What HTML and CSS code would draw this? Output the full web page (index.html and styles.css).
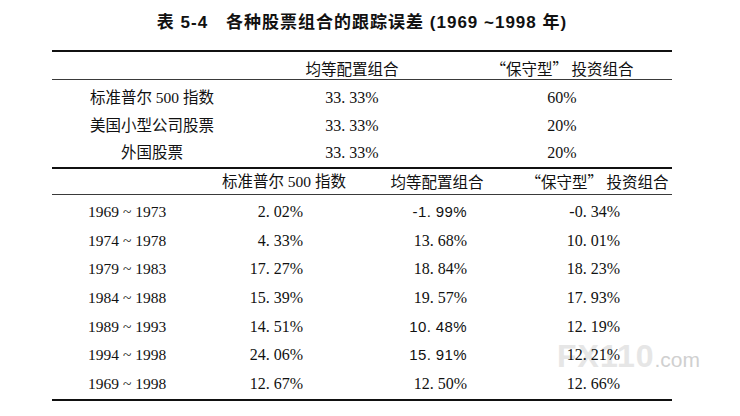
FILE: index.html
```html
<!DOCTYPE html>
<html lang="zh-CN">
<head>
<meta charset="utf-8">
<title>表 5-4 各种股票组合的跟踪误差</title>
<link rel="stylesheet" href="styles.css">
</head>
<body>
<div class="page">
  <h1 class="title">表 5-4&emsp;各种股票组合的跟踪误差 (1969 ~1998 年)</h1>
  <div class="table">
    <div class="grid3 head3">
      <div class="cell"></div>
      <div class="cell zhh">均等配置组合</div>
      <div class="cell zhh">“保守型” 投资组合</div>
    </div>
    <div class="grid3 body3">
      <div class="cell zh">标准普尔 500 指数</div>
      <div class="cell num">33. 33%</div>
      <div class="cell num">60%</div>
      <div class="cell zh">美国小型公司股票</div>
      <div class="cell num">33. 33%</div>
      <div class="cell num">20%</div>
      <div class="cell zh">外国股票</div>
      <div class="cell num">33. 33%</div>
      <div class="cell num">20%</div>
    </div>
    <div class="grid4 head4">
      <div class="cell"></div>
      <div class="cell zh">标准普尔 500 指数</div>
      <div class="cell zhh">均等配置组合</div>
      <div class="cell zhh">“保守型” 投资组合</div>
    </div>
    <div class="grid4 body4">
      <div class="yr">1969 ~ 1973</div><div class="num c2">2. 02%</div><div class="num c3 sans">-1. 99%</div><div class="num c4">-0. 34%</div>
      <div class="yr">1974 ~ 1978</div><div class="num c2">4. 33%</div><div class="num c3">13. 68%</div><div class="num c4">10. 01%</div>
      <div class="yr">1979 ~ 1983</div><div class="num c2">17. 27%</div><div class="num c3">18. 84%</div><div class="num c4">18. 23%</div>
      <div class="yr">1984 ~ 1988</div><div class="num c2">15. 39%</div><div class="num c3">19. 57%</div><div class="num c4">17. 93%</div>
      <div class="yr">1989 ~ 1993</div><div class="num c2">14. 51%</div><div class="num c3 sans">10. 48%</div><div class="num c4">12. 19%</div>
      <div class="yr">1994 ~ 1998</div><div class="num c2">24. 06%</div><div class="num c3 sans">15. 91%</div><div class="num c4">12. 21%</div>
      <div class="yr">1969 ~ 1998</div><div class="num c2">12. 67%</div><div class="num c3">12. 50%</div><div class="num c4">12. 66%</div>
    </div>
  </div>
  <div class="watermark">FX110<span class="wm-com">.com</span></div>
</div>
</body>
</html>
```

FILE: styles.css
```css
html {
  background: #fff;
}

body {
  margin: 0;
  padding: 0;
  color: #111;
}

.page {
  position: relative;
  width: 620px;
  margin: 0 0 0 52px;
}

.title {
  margin: 0;
  height: 50px;
  line-height: 46px;
  text-align: center;
  font-family: "Liberation Sans", "Noto Sans CJK SC", sans-serif;
  font-weight: 700;
  font-size: 17px;
  letter-spacing: 1px;
  white-space: nowrap;
}

.table {
  border-top: 2px solid #111;
}

.grid3 {
  display: grid;
  grid-template-columns: 200px 200px 220px;
}

.grid4 {
  display: grid;
  grid-template-columns: 164px 136px 170px 150px;
}

.cell {
  text-align: center;
  white-space: nowrap;
}

.head3 {
  box-sizing: border-box;
  height: 28px;
  padding-top: 4px;
  line-height: 24px;
  border-bottom: 1px solid #3a3a3a;
}

.body3 {
  padding-top: 4px;
  grid-auto-rows: 27.5px;
  line-height: 27.5px;
  border-bottom: 2px solid #111;
}

.head4 {
  height: 25.5px;
  line-height: 25.5px;
  border-bottom: 1px solid #3a3a3a;
}

.body4 {
  padding-top: 3px;
  grid-auto-rows: 28.7px;
  line-height: 28.7px;
  border-bottom: 2px solid #111;
}

.zh {
  font-family: "Liberation Serif", "Noto Sans CJK SC", serif;
  font-size: 15.5px;
}

.zhh {
  font-family: "Noto Sans CJK SC", sans-serif;
  font-size: 15.5px;
}

.num {
  font-family: "Liberation Serif", serif;
  font-size: 16px;
  white-space: nowrap;
}

.sans {
  font-family: "Liberation Sans", sans-serif;
  font-size: 15px;
  letter-spacing: 0.4px;
}

.yr {
  padding-left: 36px;
  font-family: "Liberation Serif", serif;
  font-size: 15.5px;
  white-space: nowrap;
}

.c2 {
  text-align: right;
  padding-right: 49px;
}

.c3 {
  text-align: right;
  padding-right: 55px;
}

.c4 {
  text-align: right;
  padding-right: 52px;
}

.watermark {
  position: absolute;
  left: 505px;
  top: 340px;
  z-index: -1;
  font-family: "Liberation Sans", sans-serif;
  font-weight: 700;
  font-size: 32px;
  line-height: 32px;
  letter-spacing: 1px;
  color: #e6e6e6;
  white-space: nowrap;
}

.wm-com {
  font-weight: 400;
  font-size: 21px;
  letter-spacing: 0;
  color: #d0d0d0;
}
```
